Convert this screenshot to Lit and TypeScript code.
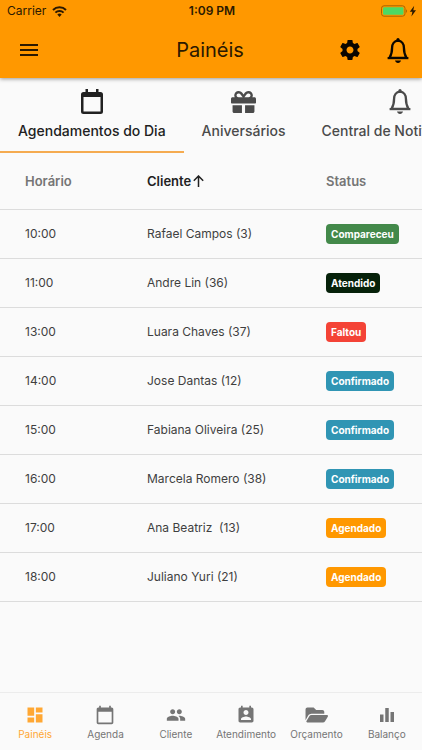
import { LitElement, html, css, svg } from "lit";
import { customElement } from "lit/decorators.js";
import { classMap } from "lit/directives/class-map.js";

const bell = svg`
  <path d="M11 2.600C7.100 2.900 5.100 6 5.100 9.600c0 5.200-.8 7.400-2.600 10.300h17c-1.800-2.900-2.600-5.100-2.600-10.300C16.900 6 14.900 2.900 11 2.600z" fill="none" stroke="currentColor" stroke-width="2.300" stroke-linejoin="round"/>
  <path d="M.6 19h20.800v2.200H.6z"/>
  <rect x="9.400" y="0" width="3.200" height="4" rx="1.600"/>
  <path d="M8 22.500h6c-.4 1.500-1.500 2.500-3 2.500s-2.600-1-3-2.500z"/>`;

interface Tab { label: string; box: string; kind: string; icon: unknown; }
const tabs: Tab[] = [
  { label: "Agendamentos do Dia", box: "0 0 22 25", kind: "cal", icon: svg`<path fill-rule="evenodd" d="M4.500 0h2.500v3h8V0h2.500v3H19.500a2.500 2.500 0 0 1 2.500 2.500v17a2.500 2.500 0 0 1-2.500 2.500h-17A2.500 2.500 0 0 1 0 22.500v-17A2.500 2.500 0 0 1 2.500 3h2zM2.500 8v14.500h17V8z"/>` },
  { label: "Aniversários", box: "0 32 512 448", kind: "gift", icon: svg`<path d="M32 448c0 17.700 14.300 32 32 32h160V320H32v128zm256 32h160c17.700 0 32-14.300 32-32V320H288v160zm192-320h-42.100c6.200-12.100 10.100-25.500 10.100-40 0-48.500-39.500-88-88-88-41.600 0-68.500 21.300-103 68.300-34.500-47-61.400-68.300-103-68.300-48.500 0-88 39.500-88 88 0 14.500 3.800 27.900 10.100 40H32c-17.700 0-32 14.300-32 32v80c0 8.800 7.200 16 16 16h480c8.800 0 16-7.200 16-16v-80c0-17.700-14.300-32-32-32zm-326.100 0c-22.100 0-40-17.900-40-40s17.900-40 40-40c19.900 0 34.600 3.300 86.100 80h-86.100zm206.100 0h-86.100c51.400-76.500 65.700-80 86.100-80 22.100 0 40 17.900 40 40s-17.900 40-40 40z"/>` },
  { label: "Central de Notificações", box: "0 0 22 25", kind: "cal", icon: bell },
];

const rows = [
  ["10:00", "Rafael Campos (3)", "Compareceu"],
  ["11:00", "Andre Lin (36)", "Atendido"],
  ["13:00", "Luara Chaves (37)", "Faltou"],
  ["14:00", "Jose Dantas (12)", "Confirmado"],
  ["15:00", "Fabiana Oliveira (25)", "Confirmado"],
  ["16:00", "Marcela Romero (38)", "Confirmado"],
  ["17:00", "Ana Beatriz  (13)", "Agendado"],
  ["18:00", "Juliano Yuri (21)", "Agendado"],
];

const nav = [
  { label: "Painéis", box: "0 0 24 24", icon: svg`<path d="M3 13h8V3H3v10zm0 8h8v-6H3v6zm10 0h8V11h-8v10zm0-18v6h8V3h-8z"/>` },
  { label: "Agenda", box: "0 0 24 24", icon: svg`<path d="M20 3h-1V1h-2v2H7V1H5v2H4c-1.100 0-2 .9-2 2v16c0 1.100.9 2 2 2h16c1.100 0 2-.9 2-2V5c0-1.100-.9-2-2-2zm0 18H4V8h16v13z"/>` },
  { label: "Cliente", box: "0 0 24 24", icon: svg`<path d="M16 11c1.660 0 2.990-1.340 2.990-3S17.660 5 16 5s-3 1.340-3 3 1.340 3 3 3zm-8 0c1.660 0 2.990-1.340 2.990-3S9.660 5 8 5 5 6.340 5 8s1.340 3 3 3zm0 2c-2.330 0-7 1.170-7 3.500V19h14v-2.500c0-2.330-4.670-3.500-7-3.500zm8 0c-.29 0-.62.02-.97.05 1.160.84 1.970 1.970 1.970 3.450V19h6v-2.500c0-2.330-4.670-3.500-7-3.500z"/>` },
  { label: "Atendimento", box: "0 0 24 24", icon: svg`<path d="M19 3h-1V1h-2v2H8V1H6v2H5c-1.110 0-2 .9-2 2v14c0 1.100.89 2 2 2h14c1.100 0 2-.9 2-2V5c0-1.100-.9-2-2-2zm-7 3c1.660 0 3 1.340 3 3s-1.340 3-3 3-3-1.340-3-3 1.340-3 3-3zm6 12H6v-1c0-2 4-3.100 6-3.100s6 1.100 6 3.100v1z"/>` },
  { label: "Orçamento", box: "-32 0 600 512", icon: svg`<path d="M572.694 292.093L500.270 416.248A63.997 63.997 0 0 1 444.989 448H45.025c-18.523 0-30.064-20.093-20.731-36.093l72.424-124.155A64 64 0 0 1 152 256h399.964c18.523 0 30.064 20.093 20.730 36.093zM152 224h328v-48c0-26.510-21.490-48-48-48H272l-64-64H48C21.490 64 0 85.490 0 112v278.046l69.077-118.418C86.214 242.250 117.989 224 152 224z"/>` },
  { label: "Balanço", box: "2 2 20 20", icon: svg`<path d="M5 11.500h3.500V19H5zM10.250 5h3.500v14h-3.500zM15.500 9H19v10h-3.500z"/>` },
];

@customElement("app-root")
export class AppRoot extends LitElement {
  static styles = css`
    :host { display: flex; flex-direction: column; min-height: 100vh; overflow: hidden; background: #fafafa; color: #3f3f3f; font-family: Inter, "Liberation Sans", sans-serif; }
    * { box-sizing: border-box; }
    svg { display: block; fill: currentColor; stroke-width: 2px; }
    button { border: 0; padding: 0; margin: 0; background: none; font: inherit; color: inherit; cursor: pointer; }
    .top { position: relative; background: #ff9800; color: #2b1900; box-shadow: 0 1px 4px rgba(0, 0, 0, 0.4); }
    .status, .bar { display: grid; grid-template-columns: 1fr auto 1fr; align-items: center; }
    .status { height: 22px; padding: 0 5px 0 7px; font-size: 12px; line-height: 22px; }
    .left, .right { display: flex; align-items: center; }
    .left { gap: 6px; }
    .right { justify-content: flex-end; }
    .clock { font-weight: 600; }
    .wifi { width: 15px; height: 11px; }
    .wifi .outer, .wifi .inner { fill: none; stroke: currentColor; }
    .battery { width: 36px; height: 12px; }
    .battery .case { fill: none; stroke: #a96500; stroke-width: 1px; }
    .bar { height: 56px; padding: 0 13px 0 11px; }
    .menu { width: 36px; height: 14px; }
    .title { margin: 0; font-size: 20px; line-height: 24px; font-weight: 400; }
    .actions { gap: 25px; color: #0a0600; }
    .gear { width: 24px; height: 24px; }
    .cal { width: 22px; height: 25px; }
    .gift { width: 25px; height: 22px; }
    .tabs { display: flex; height: 75px; overflow: hidden; }
    .tab { flex: none; display: flex; flex-direction: column; align-items: center; padding: 11px 18px 0; color: #4a4a4a; font-size: 14px; line-height: 20px; font-weight: 500; border-bottom: 2px solid transparent; white-space: nowrap; }
    .tab.on { color: #212121; border-color: #f5ab50; }
    .glyph { display: flex; height: 25px; align-items: center; margin-bottom: 7px; }
    .list { width: 100%; border-collapse: collapse; table-layout: fixed; font-size: 12px; line-height: 20px; }
    .list tr { border-bottom: 1px solid #dcdcdc; }
    th { height: 56px; padding: 0; text-align: left; font-size: 13px; font-weight: 600; color: #757575; }
    td { height: 49px; padding: 0; white-space: pre; }
    .time { width: 147px; padding-left: 25px; }
    .state { width: 96px; }
    .sort { display: flex; align-items: center; gap: 2px; color: #212121; font-weight: 600; }
    .arrow { width: 11px; height: 12px; }
    .badge { display: inline-block; vertical-align: middle; height: 20px; padding: 0 5px; border-radius: 4px; color: #fff; font-size: 10px; line-height: 21px; font-weight: 700; }
    .compareceu { background: #43894a; }
    .atendido { background: #06210a; }
    .faltou { background: #f44336; }
    .confirmado { background: #3095b4; }
    .agendado { background: #ff9800; }
    .nav { display: grid; grid-template-columns: repeat(6, 1fr); height: 58px; margin-top: auto; border-top: 1px solid #ececec; }
    .item { display: flex; flex-direction: column; align-items: center; padding-top: 12px; gap: 2px; color: #757575; font-size: 10px; line-height: 14px; text-decoration: none; }
    .item svg { width: 24px; height: 20px; }
    .item.on { color: #ffa733; }
  `;

  render() {
    return html`
      <header class="top">
        <div class="status">
          <div class="left"><span>Carrier</span>
            <svg class="wifi" viewBox="0 0 15 11"><path class="outer" d="M1 4a9.200 9.200 0 0 1 13 0"/><path class="inner" d="M3.400 6.600a5.800 5.800 0 0 1 8.200 0"/><path d="M5.300 8.600a3.100 3.100 0 0 1 4.400 0L7.500 10.900z"/></svg>
          </div>
          <span class="clock">1:09 PM</span>
          <div class="right">
            <svg class="battery" viewBox="0 0 36 12"><rect class="case" x=".5" y=".8" width="23.500" height="10.400" rx="2.500"/><rect x="2" y="2.300" width="20.500" height="7.400" rx="1.200" fill="#4cd964"/><path d="M25 4.200c1.300.5 1.300 3.100 0 3.600z" fill="#a96500"/><path d="M33.200.8l-4.400 6h2.600l-1 4.600 4.600-6.200h-2.700z"/></svg>
          </div>
        </div>
        <div class="bar">
          <div class="left"><button aria-label="Menu"><svg class="menu" viewBox="0 0 36 14"><path d="M9 1h18v2H9zM9 6h18v2H9zM9 11h18v2H9z"/></svg></button></div>
          <h1 class="title">Painéis</h1>
          <div class="right actions">
            <button aria-label="Configurações"><svg class="gear" viewBox="0 0 24 24"><path d="M19.430 12.980c.04-.32.07-.64.07-.98s-.03-.66-.07-.98l2.110-1.650c.19-.15.24-.42.12-.64l-2-3.460c-.12-.22-.39-.3-.61-.22l-2.490 1c-.52-.4-1.080-.73-1.690-.98l-.38-2.650C14.460 2.180 14.250 2 14 2h-4c-.25 0-.46.18-.49.42l-.38 2.650c-.61.25-1.170.59-1.690.98l-2.490-1c-.23-.09-.49 0-.61.22l-2 3.460c-.13.22-.07.49.12.64l2.110 1.650c-.04.32-.07.65-.07.98s.03.66.07.98l-2.110 1.650c-.19.15-.24.42-.12.64l2 3.460c.12.22.39.3.61.22l2.490-1c.52.4 1.080.73 1.690.98l.38 2.650c.03.24.24.42.49.42h4c.25 0 .46-.18.49-.42l.38-2.650c.61-.25 1.170-.59 1.690-.98l2.490 1c.23.09.49 0 .61-.22l2-3.460c.12-.22.07-.49-.12-.64l-2.110-1.650zM12 15.500c-1.930 0-3.500-1.570-3.500-3.500s1.570-3.500 3.500-3.500 3.500 1.570 3.500 3.500-1.570 3.500-3.500 3.500z"/></svg></button>
            <button aria-label="Notificações"><svg class="cal" viewBox="0 0 22 25">${bell}</svg></button>
          </div>
        </div>
      </header>
      <div class="tabs" role="tablist">
        ${tabs.map((t, i) => html`<button role="tab" aria-selected=${i === 0} class=${classMap({ tab: true, on: i === 0 })}>
          <span class="glyph"><svg class=${t.kind} viewBox=${t.box}>${t.icon}</svg></span><span>${t.label}</span></button>`)}
      </div>
      <table class="list">
        <thead><tr>
          <th class="time">Horário</th>
          <th><button class="sort">Cliente<svg class="arrow" viewBox="0 0 11 12"><path d="M5.500 12V1M.8 5.700L5.500 1l4.700 4.700" fill="none" stroke="currentColor" stroke-width="1.500"/></svg></button></th>
          <th class="state">Status</th>
        </tr></thead>
        <tbody>${rows.map(([time, name, state]) => html`<tr><td class="time">${time}</td><td>${name}</td><td><span class="badge ${state.toLowerCase()}">${state}</span></td></tr>`)}</tbody>
      </table>
      <nav class="nav">
        ${nav.map((n, i) => html`<a href="#" class=${classMap({ item: true, on: i === 0 })}><svg viewBox=${n.box}>${n.icon}</svg><span>${n.label}</span></a>`)}
      </nav>`;
  }
}
